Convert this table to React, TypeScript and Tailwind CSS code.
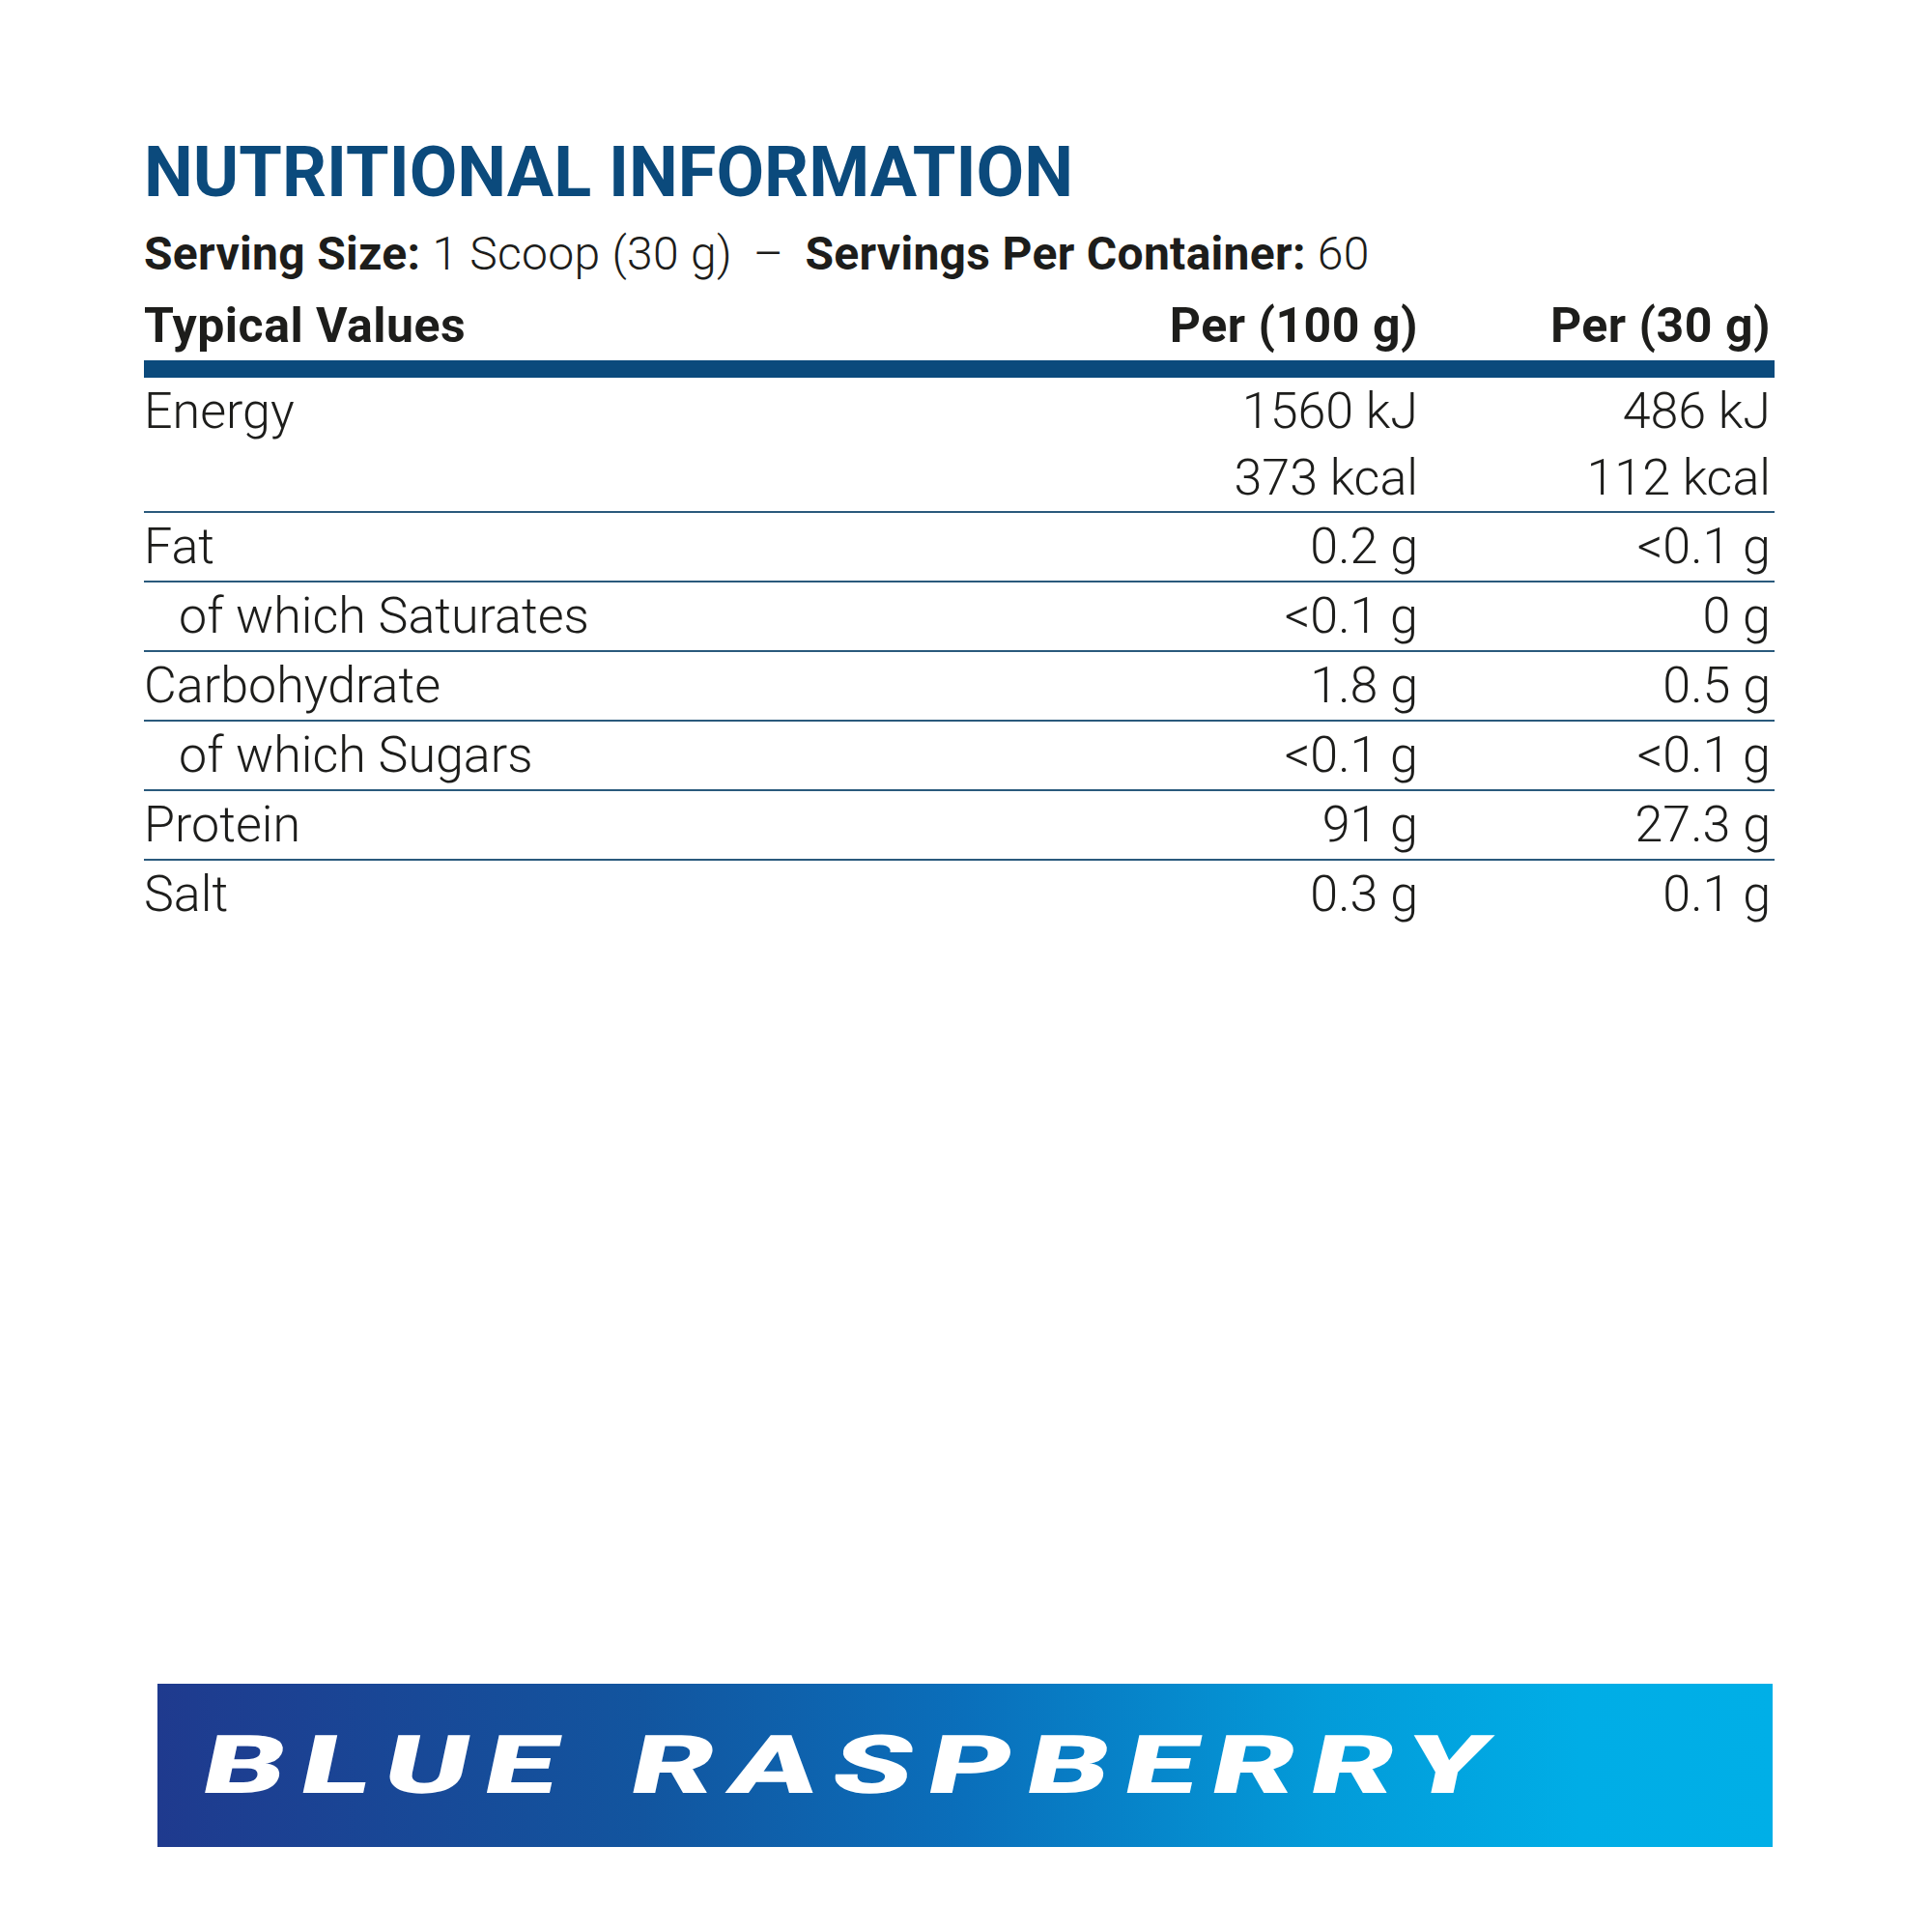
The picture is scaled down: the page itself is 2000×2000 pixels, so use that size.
import React from "react";

type Row = { label: string; a: string; b: string; indent?: boolean };

const rows: Row[] = [
  { label: "Fat", a: "0.2 g", b: "<0.1 g" },
  { label: "of which Saturates", a: "<0.1 g", b: "0 g", indent: true },
  { label: "Carbohydrate", a: "1.8 g", b: "0.5 g" },
  { label: "of which Sugars", a: "<0.1 g", b: "<0.1 g", indent: true },
  { label: "Protein", a: "91 g", b: "27.3 g" },
  { label: "Salt", a: "0.3 g", b: "0.1 g" },
];

export default function App() {
  return (
    <div className="w-[2000px] h-[2000px] bg-white font-['Roboto','Liberation_Sans',sans-serif] text-[#1d1d1b] flex flex-col">
      <div className="pl-[149px] pr-[163px] pt-[143px]">
        <h1 className="text-[72px] leading-none font-bold text-[#0b4a7c]">
          NUTRITIONAL INFORMATION
        </h1>
        <div className="mt-[24px] text-[48px] leading-none font-light whitespace-pre tracking-[0.3px]">
          <span className="font-bold">Serving Size:</span> 1 Scoop (30 g) <span className="mx-[10px]">–</span> <span className="font-bold">Servings Per Container:</span> 60
        </div>
        <div className="mt-[25px] grid grid-cols-[1fr_300px_369px] text-[50px] leading-none font-bold tracking-[0.5px]">
          <div>Typical Values</div>
          <div className="text-right">Per (100 g)</div>
          <div className="text-right pr-[4px]">Per (30 g)</div>
        </div>
        <div className="mt-[11px] h-[18px] bg-[#0b4a7c]" />
        <div className="grid grid-cols-[1fr_300px_369px] text-[52px] font-light border-b-2 border-[#2a5a7c]">
          <div className="leading-[69px]">Energy</div>
          <div className="leading-[69px] text-right">1560 kJ</div>
          <div className="leading-[69px] text-right pr-[4px]">486 kJ</div>
          <div className="leading-[69px]" />
          <div className="leading-[69px] text-right">373 kcal</div>
          <div className="leading-[69px] text-right pr-[4px]">112 kcal</div>
        </div>
        {rows.map((r, i) => (
          <div
            key={r.label}
            className={
              "grid grid-cols-[1fr_300px_369px] text-[52px] leading-[70px] font-light " +
              (i < rows.length - 1 ? "border-b-2 border-[#2a5a7c]" : "")
            }
          >
            <div className={r.indent ? "pl-[36px]" : ""}>{r.label}</div>
            <div className="text-right">{r.a}</div>
            <div className="text-right pr-[4px]">{r.b}</div>
          </div>
        ))}
      </div>
      <div className="mt-auto mb-[88px] ml-[163px] mr-[165px] h-[169px] flex items-center bg-[linear-gradient(90deg,#1f3a8e_0%,#12559f_30%,#0a6fbb_50%,#039bd9_72%,#00ade6_88%,#00afe7_100%)]">
        <div className="ml-[48px] text-white font-black text-[84px] leading-none whitespace-pre tracking-[10px] [word-spacing:8px] origin-left [transform:skewX(-12deg)_scaleX(1.58)]">
          BLUE RASPBERRY
        </div>
      </div>
    </div>
  );
}
